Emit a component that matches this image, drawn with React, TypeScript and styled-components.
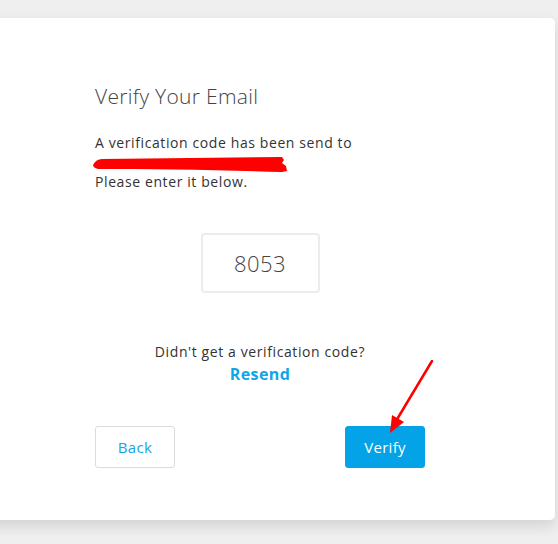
import React, { useState } from "react";
import styled, { createGlobalStyle } from "styled-components";

const GlobalStyle = createGlobalStyle`
  html, body {
    margin: 0;
    padding: 0;
    background: #efefef;
    font-family: 'Open Sans', 'Liberation Sans', sans-serif;
    overflow: hidden;
  }
`;

const VerifyEmail = () => {
  const [code, setCode] = useState("8053");

  return (
    <Page>
      <GlobalStyle />
      <Card>
        <Column>
          <Title>Verify Your Email</Title>
          <Message>
            A verification code has been send to
            <Redacted viewBox="0 0 198 20" aria-hidden="true">
              <path
                d="M1 10 C 3 6, 6 4, 10 4 L 190 2 L 192 5 L 190 8 L 194 11 L 195 16 L 190 17 C 130 15, 60 14, 6 14 C 3 13, 1 12, 1 10 Z"
                fill="#ff0000"
              />
            </Redacted>
            Please enter it below.
          </Message>
          <CodeRow>
            <CodeInput value={code} onChange={(e) => setCode(e.target.value)} />
          </CodeRow>
          <ResendBlock>
            <Hint>Didn't get a verification code?</Hint>
            <ResendLink>Resend</ResendLink>
          </ResendBlock>
          <Actions>
            <Button>Back</Button>
            <Button $primary>Verify</Button>
          </Actions>
        </Column>
        <Arrow viewBox="0 0 60 90" aria-hidden="true">
          <line x1="52" y1="8" x2="16" y2="68" stroke="#ff0000" strokeWidth="2.5" strokeLinecap="round" />
          <polygon points="10,80 12,62 24,69" fill="#ff0000" />
        </Arrow>
      </Card>
    </Page>
  );
};

const Page = styled.div`
  width: 558px;
  height: 544px;
  padding-top: 18px;
  box-sizing: border-box;
`;

const Card = styled.div`
  position: relative;
  width: 590px;
  height: 502px;
  margin-left: -35px;
  background: #fff;
  border-radius: 5px;
  box-shadow: 0 6px 14px rgba(0, 0, 0, 0.12);
  display: flex;
  justify-content: center;
  box-sizing: border-box;
  padding-top: 63px;
`;

const Column = styled.div`
  width: 330px;
  display: flex;
  flex-direction: column;
`;

const Title = styled.h1`
  margin: 0;
  font-size: 21px;
  font-weight: 300;
  color: #444;
  line-height: 30px;
  letter-spacing: 0.3px;
`;

const Message = styled.p`
  margin: 22px 0 0;
  font-size: 14px;
  line-height: 20px;
  color: #333;
  letter-spacing: 0.6px;
  display: flex;
  flex-direction: column;
`;

const Redacted = styled.svg`
  width: 198px;
  height: 20px;
  margin: 2px 0 -3px -3px;
  display: block;
`;

const CodeRow = styled.div`
  display: flex;
  justify-content: center;
  margin-top: 41px;
`;

const CodeInput = styled.input`
  width: 119px;
  height: 60px;
  box-sizing: border-box;
  border: 2px solid #ececec;
  border-radius: 4px;
  text-align: center;
  font-family: 'Open Sans', 'Liberation Sans', sans-serif;
  font-size: 22px;
  font-weight: 300;
  letter-spacing: 0.5px;
  color: #444;
  outline: none;
`;

const ResendBlock = styled.div`
  display: flex;
  flex-direction: column;
  align-items: center;
  margin-top: 49px;
`;

const Hint = styled.span`
  font-size: 14px;
  line-height: 20px;
  color: #333;
  letter-spacing: 0.6px;
`;

const ResendLink = styled.a`
  font-size: 16px;
  font-weight: 700;
  line-height: 24px;
  color: #0fa6e9;
  letter-spacing: 0.4px;
  cursor: pointer;
`;

const Actions = styled.div`
  display: flex;
  justify-content: space-between;
  margin-top: 40px;
`;

const Button = styled.button<{ $primary?: boolean }>`
  width: 80px;
  height: 42px;
  border-radius: 3px;
  border: 1px solid ${(p) => (p.$primary ? "#04a2e6" : "#dcdcdc")};
  background: ${(p) => (p.$primary ? "#04a2e6" : "#fff")};
  color: ${(p) => (p.$primary ? "#fff" : "#14a5e8")};
  font-family: 'Open Sans', 'Liberation Sans', sans-serif;
  font-size: 15px;
  letter-spacing: 0.3px;
  cursor: pointer;
`;

const Arrow = styled.svg`
  position: absolute;
  left: 415px;
  top: 335px;
  width: 60px;
  height: 90px;
`;

export default VerifyEmail;
